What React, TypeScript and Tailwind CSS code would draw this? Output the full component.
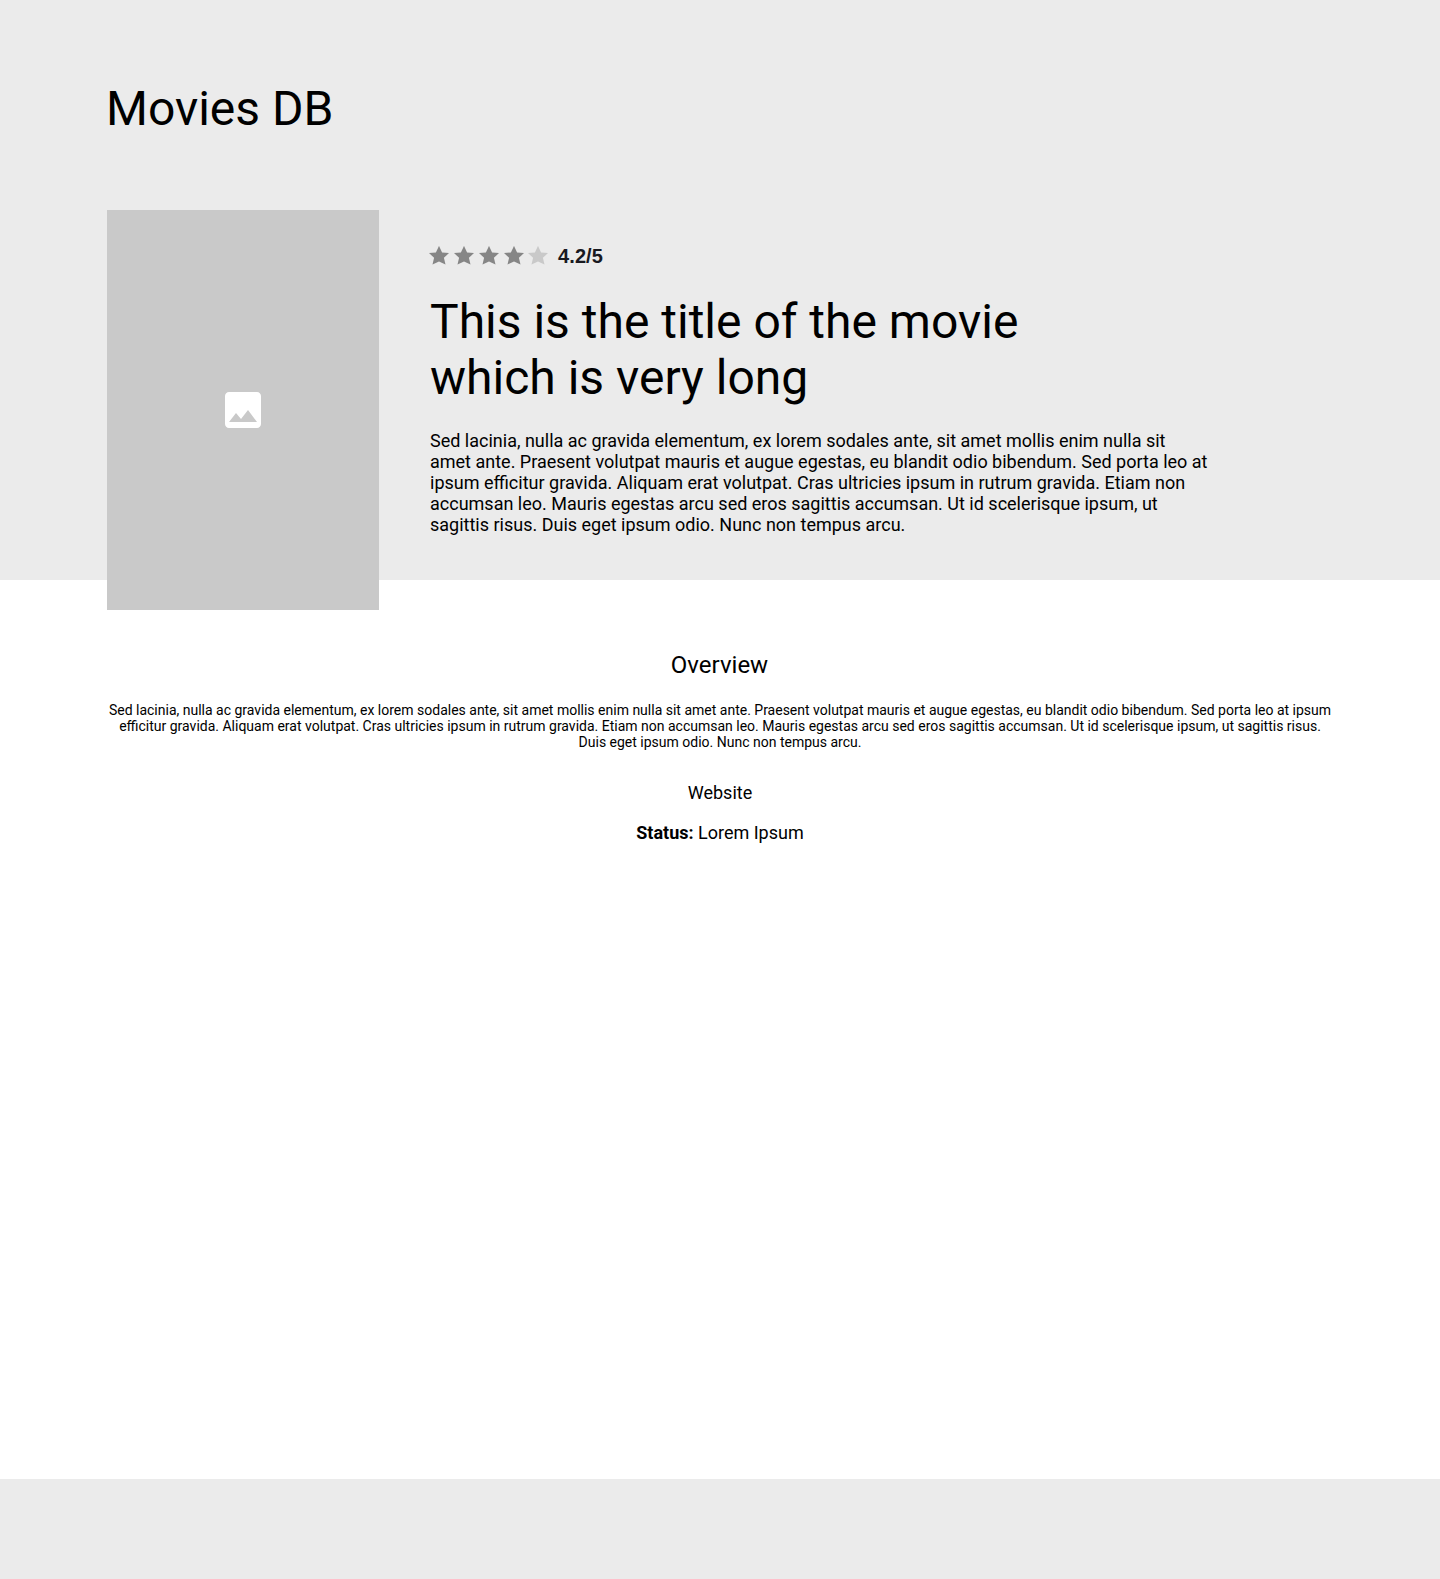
import React from "react";

const STAR = "M10 0.400L13.100 6.900L20 7.600L14.900 12.300L16.500 19L10 15.900L3.500 19L5.100 12.300L0 7.600L6.900 6.900z";

function Star({ filled }: { filled: boolean }) {
  return (
    <svg viewBox="0 0.5 20 20" className={filled ? "h-5 w-5 fill-[#868686]" : "-ml-px h-5 w-5 fill-[#c9c9c9]"}>
      <path d={STAR} />
    </svg>
  );
}

export default function App() {
  return (
    <div className="flex h-[1579px] w-[1440px] flex-col bg-white font-[Roboto,sans-serif] text-black">
      <header className="h-[580px] shrink-0 bg-[#ebebeb] px-[107px] pt-[81px]">
        <h1 className="-ml-px text-[48px] leading-[56px]">Movies DB</h1>
        <div className="mt-[73px] flex">
          <div className="flex h-[400px] w-[272px] shrink-0 items-center justify-center bg-[#c9c9c9]">
            <svg viewBox="3 3 18 18" className="h-9 w-9 fill-white">
              <path d="M21 19V5c0-1.1-.9-2-2-2H5c-1.1 0-2 .9-2 2v14c0 1.1.9 2 2 2h14c1.1 0 2-.9 2-2zM8.5 13.5l2.5 3.01L14.500 12l4.5 6H5l3.500-4.500z" />
            </svg>
          </div>
          <div className="ml-[51px] w-[790px] pt-[34px]">
            <div className="flex h-6 items-center">
              <div className="-ml-px flex gap-[5px]">
                {[1, 2, 3, 4, 5].map((n) => (
                  <Star key={n} filled={n < 5} />
                ))}
              </div>
              <span className="ml-[10px] font-['Liberation_Sans',sans-serif] text-[20px] font-bold leading-6 tracking-[0.1px] text-[#18191f]">4.2/5</span>
            </div>
            <h2 className="mt-[26px] text-[48px] leading-[56px]">
              This is the title of the movie
              <br />
              which is very long
            </h2>
            <p className="mt-[24px] whitespace-nowrap text-[18px] leading-[21px]">
              Sed lacinia, nulla ac gravida elementum, ex lorem sodales ante, sit amet mollis enim nulla sit<br />
              amet ante. Praesent volutpat mauris et augue egestas, eu blandit odio bibendum. Sed porta leo at<br />
              ipsum efficitur gravida. Aliquam erat volutpat. Cras ultricies ipsum in rutrum gravida. Etiam non<br />
              accumsan leo. Mauris egestas arcu sed eros sagittis accumsan. Ut id scelerisque ipsum, ut<br />
              sagittis risus. Duis eget ipsum odio. Nunc non tempus arcu.
            </p>
          </div>
        </div>
      </header>
      <main className="flex flex-1 flex-col items-center pt-[71px] text-center">
        <h3 className="pr-px text-[24px] leading-[28px]">Overview</h3>
        <p className="mt-[23px] whitespace-nowrap text-[14px] leading-[16px]">
          Sed lacinia, nulla ac gravida elementum, ex lorem sodales ante, sit amet mollis enim nulla sit amet ante. Praesent volutpat mauris et augue egestas, eu blandit odio bibendum. Sed porta leo at ipsum<br />
          efficitur gravida. Aliquam erat volutpat. Cras ultricies ipsum in rutrum gravida. Etiam non accumsan leo. Mauris egestas arcu sed eros sagittis accumsan. Ut id scelerisque ipsum, ut sagittis risus.<br />
          Duis eget ipsum odio. Nunc non tempus arcu.
        </p>
        <a className="mt-[32px] text-[18px] leading-[21px]">Website</a>
        <p className="mt-[19px] text-[18px] leading-[21px]">
          <b>Status:</b> Lorem Ipsum
        </p>
      </main>
      <footer className="h-[100px] shrink-0 bg-[#ebebeb]" />
    </div>
  );
}
